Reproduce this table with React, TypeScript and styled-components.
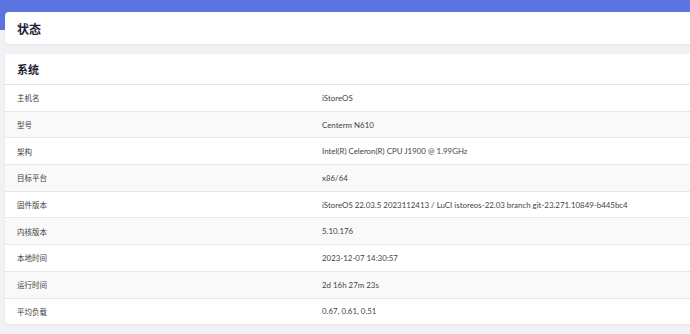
import React from "react";
import styled, { createGlobalStyle } from "styled-components";

const GlobalStyle = createGlobalStyle`
  html, body {
    margin: 0;
    padding: 0;
    overflow: hidden;
  }
  body {
    font-family: Lato, "Noto Sans CJK SC", sans-serif;
  }
`;

const Page = styled.div`
  width: 690px;
  height: 334px;
  overflow: hidden;
  background: linear-gradient(#5c74e0 0, #5c74e0 30px, #f1f2f5 30px);
  padding: 12px 0 0 5px;
  box-sizing: border-box;
  display: flex;
  flex-direction: column;
  gap: 10px;
`;

const Card = styled.section`
  width: 700px;
  background: #fff;
  border-radius: 4px;
  box-shadow: 0 1px 3px rgba(0, 0, 0, 0.05);
  overflow: hidden;
  flex-shrink: 0;
`;

const CardTitle = styled.h2<{ $small?: boolean }>`
  margin: 0;
  height: ${(p) => (p.$small ? "30px" : "32px")};
  padding-left: 12px;
  display: flex;
  align-items: center;
  font-family: "Noto Sans CJK SC", sans-serif;
  font-size: ${(p) => (p.$small ? "11px" : "12px")};
  font-weight: 700;
  color: #1c2233;
  border-bottom: ${(p) => (p.$small ? "1px solid #e4e5e8" : "none")};
`;

const Table = styled.div`
  display: flex;
  flex-direction: column;
`;

const Row = styled.div`
  display: flex;
  align-items: center;
  height: 25.7px;
  border-bottom: 1px solid #e6e7ea;
  &:nth-child(even) {
    background: #f9f9fa;
  }
  &:last-child {
    border-bottom: none;
  }
`;

const Label = styled.div`
  width: 305px;
  padding-left: 12px;
  flex-shrink: 0;
  font-family: "Noto Sans CJK SC", sans-serif;
  font-size: 7.5px;
  color: #3c3c3c;
`;

const Value = styled.div`
  font-family: Lato, "Noto Sans CJK SC", sans-serif;
  font-size: 7.9px;
  color: #444;
  white-space: nowrap;
`;

const rows: [string, string][] = [
  ["主机名", "iStoreOS"],
  ["型号", "Centerm N610"],
  ["架构", "Intel(R) Celeron(R) CPU J1900 @ 1.99GHz"],
  ["目标平台", "x86/64"],
  [
    "固件版本",
    "iStoreOS 22.03.5 2023112413 / LuCI istoreos-22.03 branch git-23.271.10849-b445bc4",
  ],
  ["内核版本", "5.10.176"],
  ["本地时间", "2023-12-07 14:30:57"],
  ["运行时间", "2d 16h 27m 23s"],
  ["平均负载", "0.67, 0.61, 0.51"],
];

export default function App() {
  return (
    <>
      <GlobalStyle />
      <Page>
        <Card>
          <CardTitle>状态</CardTitle>
        </Card>
        <Card>
          <CardTitle $small>系统</CardTitle>
          <Table>
            {rows.map(([k, v]) => (
              <Row key={k}>
                <Label>{k}</Label>
                <Value>{v}</Value>
              </Row>
            ))}
          </Table>
        </Card>
      </Page>
    </>
  );
}
